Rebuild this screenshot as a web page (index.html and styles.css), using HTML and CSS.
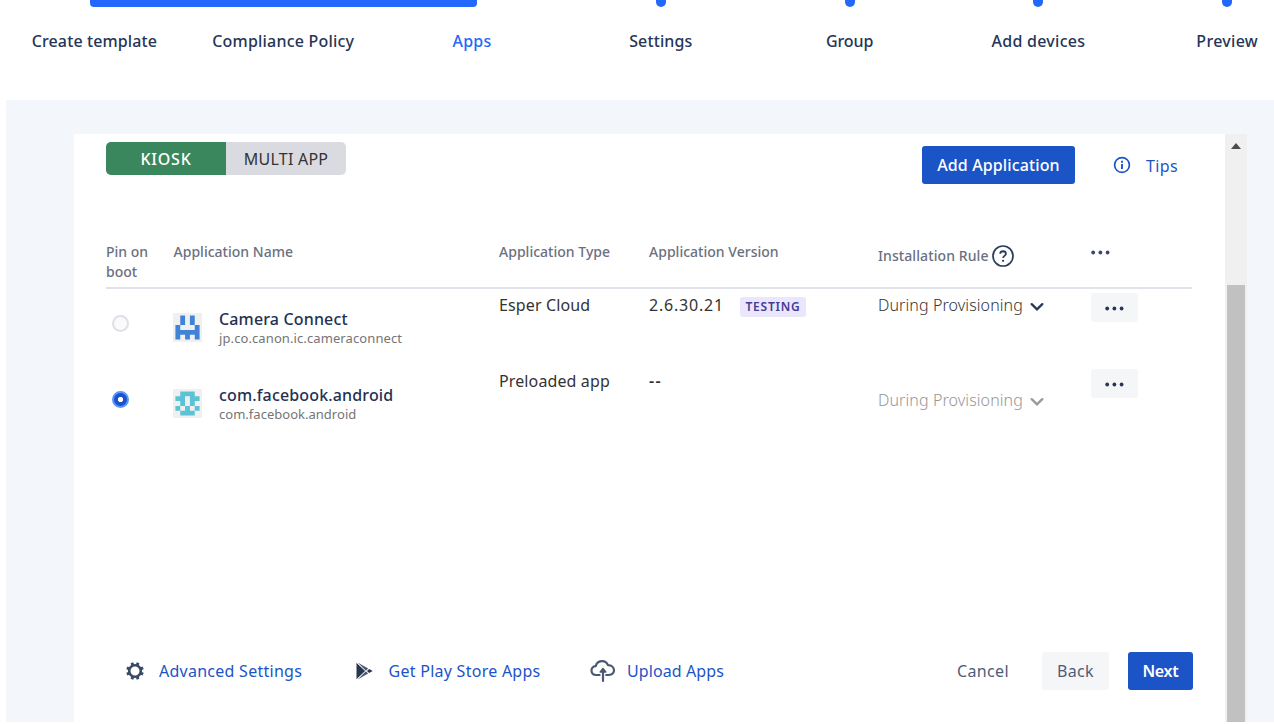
FILE: index.html
```html
<!DOCTYPE html>
<html lang="en">
<head>
<meta charset="utf-8">
<title>Template apps</title>
<link rel="stylesheet" href="styles.css">
</head>
<body>
<svg width="0" height="0" class="defs">
  <symbol id="dots" viewBox="0 0 19 5"><circle cx="2.2" cy="2.5" r="1.9"/><circle cx="9.4" cy="2.5" r="1.9"/><circle cx="16.6" cy="2.5" r="1.9"/></symbol>
  <symbol id="chevron" viewBox="0 0 14 10"><path d="M1.7 2.2L7 7.3l5.3-5.1" fill="none" stroke="currentColor" stroke-width="2.4" stroke-linecap="round"/></symbol>
</svg>
<header class="stepper">
  <div class="progress"></div>
  <ol class="steps">
    <li class="step">Create template</li>
    <li class="step policy">Compliance Policy</li>
    <li class="step active">Apps</li>
    <li class="step todo">Settings</li>
    <li class="step todo group">Group</li>
    <li class="step todo devices">Add devices</li>
    <li class="step todo preview">Preview</li>
  </ol>
</header>
<main class="stage">
  <section class="panel">
    <div class="content">
      <div class="toolbar">
        <div class="modes">
          <button class="mode selected">KIOSK</button>
          <button class="mode">MULTI APP</button>
        </div>
        <button class="btn primary add">Add Application</button>
        <a class="tips">
          <svg width="18" height="18" viewBox="0 0 18 18"><circle cx="9" cy="9" r="7.4" fill="none" stroke="currentColor" stroke-width="1.7"/><path d="M9 4.8v1.9M9 8v5.1" stroke="currentColor" stroke-width="1.9"/></svg>
          <span>Tips</span>
        </a>
      </div>
      <div class="grid head">
        <div class="pin-title">Pin on<br>boot</div>
        <div>Application Name</div>
        <div>Application Type</div>
        <div>Application Version</div>
        <div class="rule-title"><span>Installation Rule</span>
          <svg width="22" height="22" viewBox="0 0 22 22"><circle cx="11" cy="11" r="10" fill="none" stroke="#2b3d5c" stroke-width="1.7"/><path d="M8.2 8.7c.2-3.3 5.7-3.2 5.7 0 0 2.2-2.8 2.1-2.8 4.3" fill="none" stroke="#2b3d5c" stroke-width="1.8"/><circle cx="11.1" cy="15.8" r="1.1" fill="#2b3d5c"/></svg>
        </div>
        <div class="head-dots"><svg width="19" height="5"><use href="#dots"/></svg></div>
      </div>
      <div class="grid row">
        <div class="pin"><span class="radio"></span></div>
        <div class="app">
          <svg class="avatar" width="29" height="29" viewBox="-.5 -.5 6 6"><path fill="#f0f0f0" d="M-.5-.5h6v6h-6z"/><path fill="#4184d5" d="M1 0h1v2h-1zM3 0h1v2h-1zM0 2h1v1h3v-1h1v3h-1v-1h-1v1h-1v-1h-1v1h-1z"/></svg>
          <div class="labels"><div class="name">Camera Connect</div><div class="pkg">jp.co.canon.ic.cameraconnect</div></div>
        </div>
        <div>Esper Cloud</div>
        <div class="version"><span class="number">2.6.30.21</span><span class="tag">TESTING</span></div>
        <div class="rule"><span>During Provisioning</span><svg width="14" height="10"><use href="#chevron"/></svg></div>
        <div><button class="more"><svg width="19" height="5"><use href="#dots"/></svg></button></div>
      </div>
      <div class="grid row">
        <div class="pin"><span class="radio checked"></span></div>
        <div class="app">
          <svg class="avatar" width="29" height="29" viewBox="-.5 -.5 6 6"><path fill="#f0f0f0" d="M-.5-.5h6v6h-6z"/><path fill="#5bc3d5" d="M1 0h3v1h1v1h-1v1h-1v-2h-1v2h-1v-1h-1v-1h1zM0 3h1v1h-1zM2 3h1v1h-1zM4 3h1v1h-1zM1 4h3v1h-3z"/></svg>
          <div class="labels"><div class="name">com.facebook.android</div><div class="pkg short">com.facebook.android</div></div>
        </div>
        <div>Preloaded app</div>
        <div class="version dashes">--</div>
        <div class="rule disabled"><span>During Provisioning</span><svg width="14" height="10"><use href="#chevron"/></svg></div>
        <div><button class="more"><svg width="19" height="5"><use href="#dots"/></svg></button></div>
      </div>
      <footer class="footer">
        <a class="link settings">
          <svg width="18" height="18" viewBox="0 0 18 18" fill="none" stroke="#3b4b66"><circle cx="9" cy="9" r="5.8" stroke-width="2.6"/><path stroke-width="2.9" d="M5.9.8l1 2.7M12.1.8l-1 2.7M17.2 5.9l-2.7 1M17.2 12.1l-2.7-1M12.1 17.2l-1-2.7M5.9 17.2l1-2.7M.8 12.1l2.7-1M.8 5.9l2.7 1"/></svg>
          <span>Advanced Settings</span></a>
        <a class="link play">
          <svg width="17" height="18" viewBox="0 0 17 18"><path fill="#26364f" d="M.5 .8L9.300 9 .5 17.200z"/><path fill="#4b5a72" d="M1.600.6l10.600 5.800-2.400 2.400zM1.600 17.400l10.600-5.800-2.400-2.400z"/><path fill="#26364f" d="M13.100 6.900L16.700 9l-3.600 2.100L11 9z"/><path d="M1 .9L9.500 9 1 17.100" fill="none" stroke="#fff" stroke-width=".5"/></svg>
          <span>Get Play Store Apps</span></a>
        <a class="link upload">
          <svg width="26" height="24" viewBox="0 0 26 24" fill="none" stroke="#4a5872" stroke-width="2.2" stroke-linecap="round" stroke-linejoin="round"><path d="M9.600 16H6.300C.2 16-.2 7.700 5.700 7.200 7.100 1 15.600.3 18 6.200c7.800.4 8 9.800.7 9.800h-2.500M13 22V10.500"/><path fill="#4a5872" stroke-width="1.500" d="M10.200 12.900L13 9.600l2.800 3.300z"/></svg>
          <span>Upload Apps</span></a>
        <div class="actions">
          <button class="btn cancel">Cancel</button>
          <button class="btn back">Back</button>
          <button class="btn primary next">Next</button>
        </div>
      </footer>
    </div>
    <div class="scrollbar"><span class="arrow"></span><span class="thumb"></span></div>
  </section>
</main>
</body>
</html>
```
FILE: styles.css
```css
* { box-sizing: border-box; }
body {
  margin: 0;
  width: 1274px;
  height: 724px;
  overflow: hidden;
  background: #fff;
  font-family: "Noto Sans", sans-serif;
  font-size: 16px;
  line-height: 20px;
  letter-spacing: .12px;
  color: #333;
}
button { font: inherit; letter-spacing: inherit; border: 0; padding: 0; background: none; color: inherit; }
svg { display: block; flex: none; }
.defs { position: absolute; }

.stepper { position: relative; height: 100px; }
.progress {
  position: absolute; left: 90px; top: 0; width: 387px; height: 6.5px;
  background: #2468fb; border-radius: 0 0 4px 4px;
}
.steps {
  display: grid; grid-template-columns: repeat(7, 188.8px);
  list-style: none; margin: 0; padding: 31px 0 0;
  text-align: center; font-weight: 500; color: #263556;
}
.step { position: relative; }
.policy { letter-spacing: .2px; }
.active { color: #2468fb; letter-spacing: .2px; }
.group { letter-spacing: -.1px; }
.devices { letter-spacing: .27px; }
.preview { letter-spacing: .3px; }
.todo::before {
  content: ""; position: absolute; left: 89.4px; top: -31px; width: 10px; height: 6.5px;
  background: #2468fb; border-radius: 0 0 5px 5px;
}

.stage { margin-left: 6px; height: 622px; padding: 34px 27px 0 68px; background: #f3f6fb; }
.panel { display: flex; height: 588px; background: #fff; }
.content { display: flex; flex-direction: column; width: 1151px; padding-left: 32px; }

.toolbar { display: flex; height: 108px; padding-top: 8px; }
.modes { display: flex; width: 240px; height: 33px; border-radius: 5px; overflow: hidden; background: #dadbe1; }
.mode { width: 120px; letter-spacing: .24px; }
.mode.selected { background: #3a875e; color: #fff; font-weight: 500; letter-spacing: .8px; }
.btn { height: 38px; border-radius: 3px; }
.primary { background: #1b54c7; color: #fff; font-weight: 500; }
.add { width: 153px; margin: 4px 0 0 576px; }
.tips { display: flex; gap: 15px; margin: 14px 0 0 38px; color: #1b54c7; letter-spacing: .37px; }

.grid { display: grid; width: 1086px; flex: none; grid-template-columns: 67.5px 325.5px 150px 229px 212.5px 1fr; }
.head { height: 47px; border-bottom: 2px solid #e2e2ea; font-size: 14px; font-weight: 500; color: #6a7080; letter-spacing: .02px; }
.pin-title { letter-spacing: 0; }
.rule-title { display: flex; align-items: center; gap: 3px; height: 28px; letter-spacing: .09px; }
.head-dots { padding-top: 8px; fill: #3c4966; }

.row { height: 75.7px; padding-top: 6px; }
.pin { padding: 20px 0 0 6px; }
.radio { display: block; width: 17px; height: 17px; border: 2px solid #dfdfe6; border-radius: 50%; background: #fafafc; }
.radio.checked {
  border: 2px solid #5c94fb;
  background: radial-gradient(circle, #fff 0 2.2px, #1b54c7 3px);
}
.app { display: flex; gap: 17px; }
.avatar { margin-top: 18px; margin-left: -.5px; }
.labels { padding-top: 14px; }
.name { height: 19px; font-weight: 500; color: #243150; letter-spacing: .15px; }
.pkg { font-size: 13px; letter-spacing: .1px; color: #757575; }
.pkg.short { letter-spacing: .02px; }
.version { display: flex; gap: 16px; }
.number { letter-spacing: .8px; }
.dashes { font-weight: 600; letter-spacing: 1.3px; }
.tag {
  width: 66px; height: 20px; margin-top: 2px; border-radius: 3px; text-align: center;
  font-size: 12px; font-weight: 600; letter-spacing: .77px; color: #453b93; background: #e9e6fd;
}
.rule { display: flex; gap: 7px; font-weight: 300; letter-spacing: .1px; }
.rule svg { margin-top: 7px; color: #2b3a5c; }
.rule.disabled { padding-top: 19px; color: #959595; }
.rule.disabled svg { color: #9a9a9a; }
.more {
  display: flex; align-items: center; justify-content: center;
  width: 47px; height: 29px; margin-top: -2px; padding-top: 2px; border-radius: 3px;
  background: #f5f6f8; fill: #283656;
}

.footer { display: flex; align-items: center; width: 1087px; height: 38px; margin-top: 211.6px; }
.link { display: flex; align-items: center; color: #1b54c7; letter-spacing: .26px; }
.settings { margin-left: 20px; gap: 15px; }
.play { margin-left: 54px; gap: 15.5px; }
.upload { margin-left: 49px; gap: 11.5px; letter-spacing: .1px; }
.actions { display: flex; margin-left: auto; }
.cancel { width: 52px; color: #4f5c76; letter-spacing: .35px; }
.back { width: 67px; margin-left: 33px; background: #f5f6f8; color: #4f5c76; letter-spacing: .3px; }
.next { width: 65px; margin-left: 19px; font-weight: 600; letter-spacing: -.28px; }

.scrollbar { display: flex; flex-direction: column; align-items: center; width: 22px; padding-top: 9px; background: #f0f0f0; }
.arrow { width: 0; height: 0; border: 5px solid transparent; border-top-width: 0; border-bottom: 6px solid #4c4c4c; }
.thumb { width: 18px; height: 437px; margin-top: auto; background: #c1c1c1; }
```
